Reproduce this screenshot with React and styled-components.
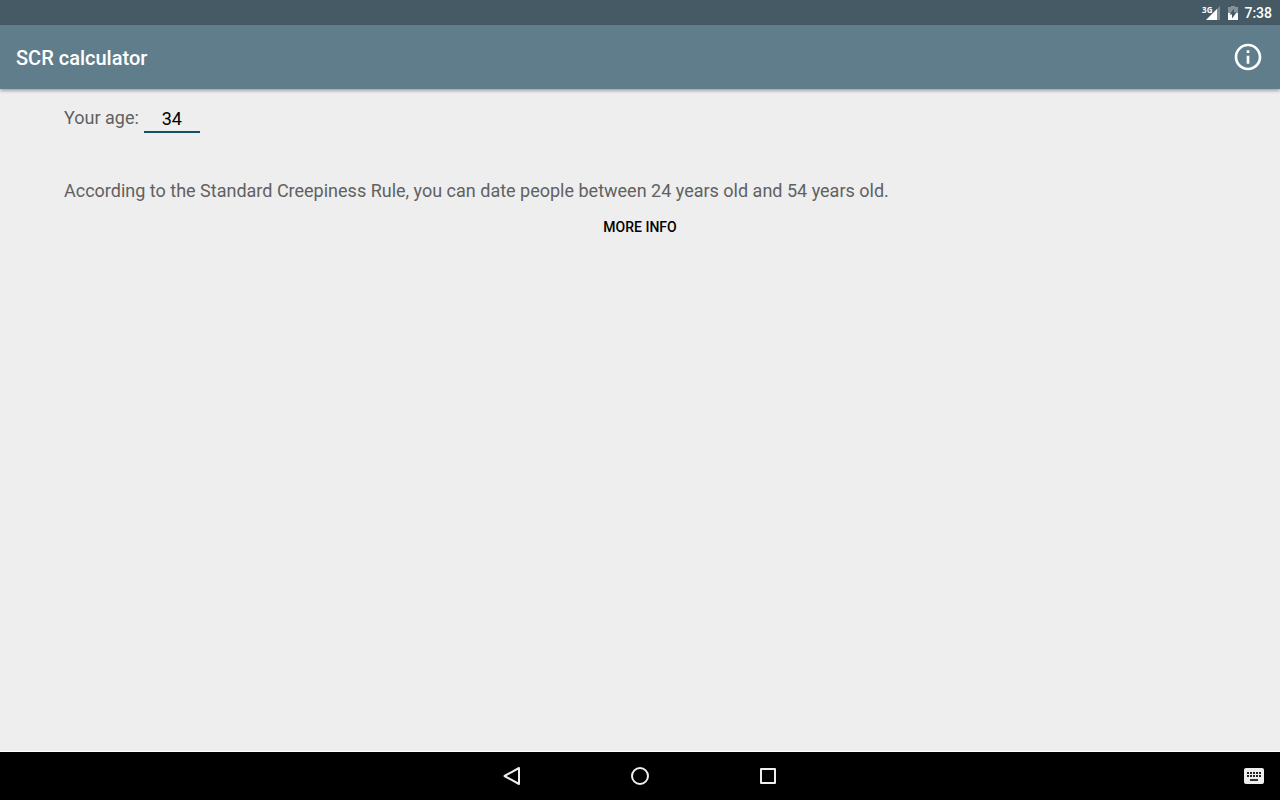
import React, { useState } from 'react';
import styled, { createGlobalStyle } from 'styled-components';

const App = () => {
  const [age, setAge] = useState('34');
  const years = Number(age) || 0;
  const youngest = Math.ceil(years / 2 + 7);
  const oldest = Math.max((years - 7) * 2, 0);

  return (
    <Screen>
      <GlobalStyle />
      <StatusBar>
        <SignalIcon />
        <BatteryIcon />
        <Clock>7:38</Clock>
      </StatusBar>
      <Toolbar>
        <Title>SCR calculator</Title>
        <IconButton aria-label="About">
          <InfoIcon />
        </IconButton>
      </Toolbar>
      <Content>
        <AgeRow>
          <AgeLabel htmlFor="age">Your age:</AgeLabel>
          <AgeInput
            id="age"
            inputMode="numeric"
            value={age}
            onChange={e => setAge(e.target.value)}
          />
        </AgeRow>
        <Result>
          According to the Standard Creepiness Rule, you can date people between {youngest} years old and {oldest} years old.
        </Result>
        <MoreButton>MORE INFO</MoreButton>
      </Content>
      <NavBar>
        <NavGroup>
          <NavButton aria-label="Back">
            <svg width="24" height="24" viewBox="0 0 24 24">
              <path d="M19 4v16L4.5 12z" fill="none" stroke="#eee" strokeWidth="2" strokeLinejoin="round" />
            </svg>
          </NavButton>
          <NavButton aria-label="Home">
            <svg width="24" height="24" viewBox="0 0 24 24">
              <circle cx="12" cy="12" r="8" fill="none" stroke="#eee" strokeWidth="2" />
            </svg>
          </NavButton>
          <NavButton aria-label="Recent apps">
            <svg width="24" height="24" viewBox="0 0 24 24">
              <rect x="5" y="5" width="14" height="14" fill="none" stroke="#eee" strokeWidth="2" strokeLinejoin="round" />
            </svg>
          </NavButton>
        </NavGroup>
        <KeyboardButton aria-label="Keyboard">
          <KeyboardIcon />
        </KeyboardButton>
      </NavBar>
    </Screen>
  );
};

const SignalIcon = () => (
  <Signal>
    <Network>3G</Network>
    <svg width="14" height="14" viewBox="0 0 14 14">
      <path d="M14 0v14H0z" fill="#fff" fillOpacity="0.3" />
      <path d="M11 3v11H0z" fill="#fff" />
    </svg>
  </Signal>
);

const BatteryIcon = () => (
  <svg width="10" height="16" viewBox="0 0 10 16">
    <path d="M3 1h4v1h3v6H0V2h3z" fill="#fff" fillOpacity="0.35" />
    <path d="M0 8h10v7H0z" fill="#fff" />
    <path d="M6 3.5v4h2.5L4 13.500V9.500H1.500z" fill="#455a64" />
  </svg>
);

const InfoIcon = () => (
  <svg width="32" height="32" viewBox="0 0 24 24">
    <path
      d="M11 17h2v-6h-2v6zm1-15C6.480 2 2 6.480 2 12s4.480 10 10 10 10-4.480 10-10S17.520 2 12 2zm0 18c-4.410 0-8-3.590-8-8s3.590-8 8-8 8 3.590 8 8-3.590 8-8 8zM11 9h2V7h-2v2z"
      fill="#fff"
    />
  </svg>
);

const keyColumns = [5, 8, 11, 14, 17];

const KeyboardIcon = () => (
  <svg width="24" height="24" viewBox="0 0 24 24">
    <rect x="2" y="4" width="20" height="16" rx="2" fill="#eee" />
    {keyColumns.map(x => (
      <g key={x} fill="#222">
        <rect x={x} y="8" width="2" height="2" />
        <rect x={x} y="11" width="2" height="2" />
      </g>
    ))}
    <rect x="8" y="15" width="8" height="2" fill="#333" />
  </svg>
);

const GlobalStyle = createGlobalStyle`
  body {
    margin: 0;
    background-color: #eee;
    font-family: Roboto, sans-serif;
  }
  button, input {
    font-family: inherit;
    border: none;
    background-color: transparent;
    padding: 0;
    margin: 0;
  }
  button {
    cursor: pointer;
  }
  svg {
    display: block;
  }
`;

const Screen = styled.div`
  display: flex;
  flex-direction: column;
  min-height: 100vh;
`;

const StatusBar = styled.div`
  display: flex;
  justify-content: flex-end;
  align-items: center;
  gap: 8px;
  height: 25px;
  padding: 0 8px;
  background-color: #455a64;
`;

const Signal = styled.div`
  display: flex;
  align-items: center;
`;

const Network = styled.span`
  align-self: flex-start;
  margin-right: -6px;
  font-family: "Open Sans", sans-serif;
  font-size: 8px;
  line-height: 7px;
  font-weight: 700;
  color: #fff;
`;

const Clock = styled.span`
  margin-left: -2px;
  font-size: 14px;
  font-weight: 500;
  color: #fff;
`;

const Toolbar = styled.header`
  display: flex;
  justify-content: space-between;
  align-items: center;
  height: 64px;
  padding: 0 16px;
  background-color: #607d8b;
  box-shadow: 0 2px 3px rgba(0, 0, 0, .3);
`;

const Title = styled.h1`
  margin: 0;
  padding-top: 2px;
  font-size: 20px;
  line-height: 24px;
  font-weight: 500;
  color: #fff;
`;

const IconButton = styled.button`
  display: flex;
`;

const Content = styled.main`
  display: flex;
  flex-direction: column;
  flex: 1;
  padding: 16px 64px;
`;

const AgeRow = styled.div`
  display: flex;
  align-items: flex-start;
  gap: 5px;
`;

const AgeLabel = styled.label`
  font-size: 18px;
  line-height: 26px;
  color: #616161;
`;

const AgeInput = styled.input`
  box-sizing: border-box;
  width: 56px;
  height: 28px;
  border-bottom: 2px solid #15506a;
  font-size: 18px;
  line-height: 24px;
  text-align: center;
  color: #000;
  outline: none;
`;

const Result = styled.p`
  margin: 46px 0 0;
  font-size: 18px;
  line-height: 24px;
  color: #616161;
`;

const MoreButton = styled.button`
  align-self: center;
  height: 48px;
  padding: 0 8px;
  font-size: 14px;
  font-weight: 500;
  color: #000;
`;

const NavBar = styled.nav`
  display: grid;
  grid-template-columns: 1fr auto 1fr;
  align-items: center;
  height: 48px;
  border-top: 1px solid #fff;
  background-color: #000;
`;

const NavGroup = styled.div`
  display: flex;
  grid-column: 2;
`;

const NavButton = styled.button`
  display: flex;
  justify-content: center;
  align-items: center;
  width: 128px;
  height: 48px;
`;

const KeyboardButton = styled.button`
  display: flex;
  justify-self: end;
  padding: 0 14px;
`;

export default App;
